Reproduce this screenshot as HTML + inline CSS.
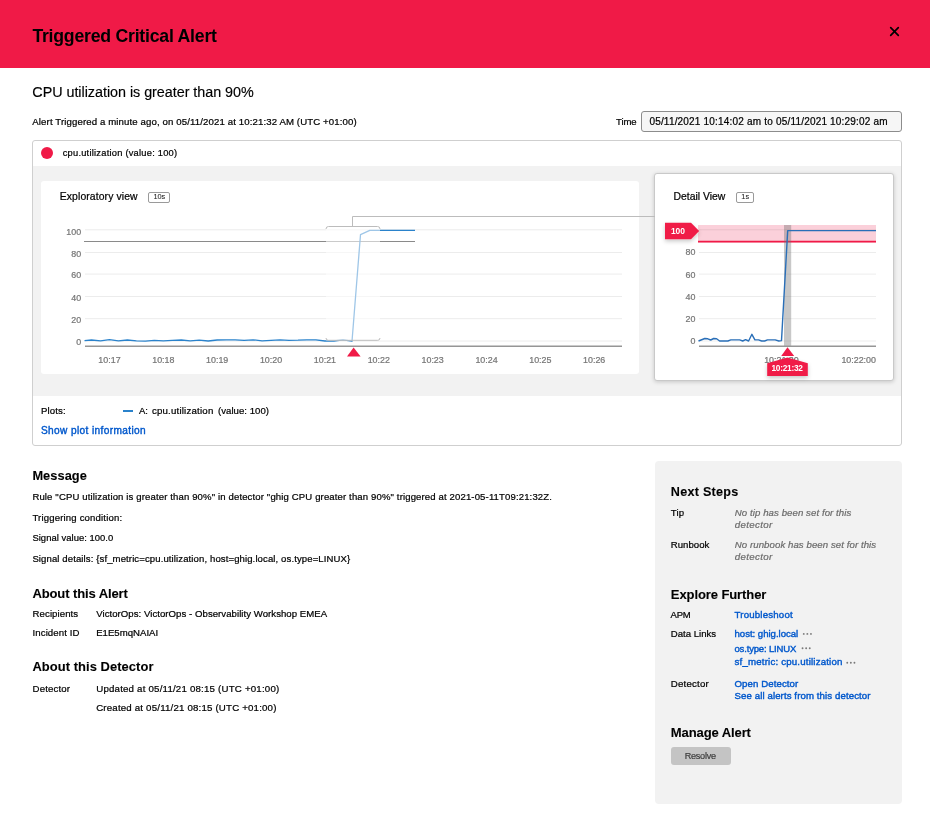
<!DOCTYPE html>
<html><head><meta charset="utf-8"><title>Triggered Critical Alert</title>
<style>
html,body{margin:0;padding:0;}
body{width:930px;height:820px;overflow:hidden;background:#fff;position:relative;font-family:"Liberation Sans",sans-serif;}
.a{position:absolute;box-sizing:border-box;}
.t{position:absolute;white-space:nowrap;font-family:"Liberation Sans",sans-serif;}
.tl{position:absolute;left:0;top:0;width:930px;height:820px;will-change:transform;}
svg.full{position:absolute;left:0;top:0;width:930px;height:820px;}
</style></head><body>
<div class="a" style="left:0;top:0;width:930px;height:68px;background:#f01a47"></div>
<svg class="full" viewBox="0 0 930 820" style="z-index:1"><path d="M890.7,27.7 L898.3,35.3 M898.3,27.7 L890.7,35.3" stroke="#000" stroke-width="1.7" stroke-linecap="round"/></svg>
<div class="a" style="left:641px;top:111px;width:261px;height:21px;border:1px solid #8c8c8c;border-radius:3px;background:#f6f6f6"></div>
<div class="a" style="left:32px;top:140px;width:870px;height:306px;border:1px solid #cfcfcf;border-radius:3px;background:#fff"></div>
<div class="a" style="left:33px;top:166px;width:868px;height:230px;background:#f2f2f2"></div>
<div class="a" style="left:41px;top:147px;width:12px;height:12px;border-radius:50%;background:#f01a47"></div>
<div class="a" style="left:41px;top:181px;width:598px;height:193px;border-radius:3px;background:#fff"></div>
<div class="a" style="left:654px;top:173px;width:240px;height:208px;border:1px solid #c9c9c9;border-radius:3px;background:#fff;box-shadow:0 1px 4px rgba(0,0,0,0.18)"></div>
<div class="a" style="left:148px;top:191.5px;width:22px;height:11px;border:1px solid #9a9a9a;border-radius:2px"></div>
<div class="a" style="left:736px;top:191.5px;width:18px;height:11px;border:1px solid #9a9a9a;border-radius:2px"></div>
<div class="a" style="left:122.8px;top:410.3px;width:10.2px;height:2px;background:#2a82cb"></div>
<div class="a" style="left:655px;top:461px;width:247px;height:343px;border-radius:4px;background:#f2f2f2"></div>
<div class="a" style="left:671px;top:747px;width:60px;height:18px;border-radius:3px;background:#c4c4c4"></div>
<svg class="full" viewBox="0 0 930 820">
<line x1="85" y1="229.8" x2="622" y2="229.8" stroke="#ececec" stroke-width="1"/>
<line x1="85" y1="252.5" x2="622" y2="252.5" stroke="#ececec" stroke-width="1"/>
<line x1="85" y1="274.1" x2="622" y2="274.1" stroke="#ececec" stroke-width="1"/>
<line x1="85" y1="296.5" x2="622" y2="296.5" stroke="#ececec" stroke-width="1"/>
<line x1="85" y1="318.7" x2="622" y2="318.7" stroke="#ececec" stroke-width="1"/>
<line x1="85" y1="341.0" x2="622" y2="341.0" stroke="#ececec" stroke-width="1"/>
<line x1="84" y1="241.5" x2="415" y2="241.5" stroke="#8a8a8a" stroke-width="1.2"/>
<path d="M84.5,340.6 L91.5,340.0 L100.5,340.8 L109.5,339.7 L118.4,340.8 L127.4,340.0 L136.4,340.8 L145.4,341.1 L154.3,340.3 L163.3,340.8 L172.3,340.4 L181.3,340.0 L190.2,340.8 L199.2,340.2 L208.2,341.0 L217.2,340.0 L226.2,339.8 L235.1,339.8 L244.1,340.4 L253.1,339.8 L262.1,340.8 L271.0,340.4 L280.0,339.8 L289.0,340.4 L298.0,340.2 L306.9,339.8 L315.9,339.8 L324.9,341.0 L333.9,341.0 L342.9,339.8 L352.0,341.2 L360.5,234.7 L369.8,230.4 L415.0,230.4" fill="none" stroke="#2a82cb" stroke-width="1.3" stroke-linejoin="round"/>
<rect x="326" y="227" width="54" height="113.5" fill="rgba(255,255,255,0.55)"/>
<path d="M326,229 Q326,226.5 328.5,226.5 L377.5,226.5 Q380,226.5 380,229" fill="none" stroke="#bcbcbc" stroke-width="1"/>
<path d="M326,338 Q326,340.3 328.3,340.3 L377.7,340.3 Q380,340.3 380,338" fill="none" stroke="#bcbcbc" stroke-width="1"/>
<path d="M352.5,226.5 L352.5,216.5 L655,216.5" fill="none" stroke="#bcbcbc" stroke-width="1"/>
<line x1="85" y1="346.3" x2="622" y2="346.3" stroke="#969696" stroke-width="1.5"/>
<polygon points="353.6,347.6 347,356.6 360.6,356.6" fill="#f01a47"/>
<rect x="698" y="225" width="178" height="17.5" fill="#fbd0da"/>
<line x1="699" y1="229.8" x2="876" y2="229.8" stroke="rgba(0,0,0,0.075)" stroke-width="1"/>
<line x1="699" y1="252.5" x2="876" y2="252.5" stroke="rgba(0,0,0,0.075)" stroke-width="1"/>
<line x1="699" y1="274.1" x2="876" y2="274.1" stroke="rgba(0,0,0,0.075)" stroke-width="1"/>
<line x1="699" y1="296.5" x2="876" y2="296.5" stroke="rgba(0,0,0,0.075)" stroke-width="1"/>
<line x1="699" y1="318.7" x2="876" y2="318.7" stroke="rgba(0,0,0,0.075)" stroke-width="1"/>
<line x1="699" y1="341.0" x2="876" y2="341.0" stroke="rgba(0,0,0,0.075)" stroke-width="1"/>
<line x1="698" y1="241.6" x2="876" y2="241.6" stroke="#f01a47" stroke-width="1.6"/>
<rect x="784" y="225" width="7.2" height="121" fill="rgba(110,110,110,0.38)"/>
<path d="M698.5,341.0 L704.8,338.5 L707.8,338.8 L710.7,340.0 L713.7,338.5 L716.6,338.8 L719.6,341.0 L727.9,341.0 L730.8,339.9 L739.7,339.9 L742.7,341.0 L745.6,339.6 L748.6,341.0 L751.9,334.3 L754.9,339.9 L758.6,339.9 L761.6,341.0 L764.6,341.0 L767.5,339.9 L775.2,339.9 L778.8,341.0 L781.5,340.6 L787.7,230.6 L876.0,230.6" fill="none" stroke="#2a6fb8" stroke-width="1.4" stroke-linejoin="round"/>
<line x1="699" y1="346.3" x2="876" y2="346.3" stroke="#969696" stroke-width="1.5"/>
</svg>
<div class="tl"><div class="t" style="left:32.40px;top:28.02px;font-size:17.70px;line-height:17.70px;letter-spacing:-0.239px;font-weight:bold;font-style:normal;color:#000;-webkit-text-stroke:0.00px currentColor;">Triggered Critical Alert</div>
<div class="t" style="left:32.30px;top:85.05px;font-size:14.35px;line-height:14.35px;letter-spacing:-0.029px;font-weight:normal;font-style:normal;color:#000;-webkit-text-stroke:0.15px currentColor;">CPU utilization is greater than 90%</div>
<div class="t" style="left:32.30px;top:116.53px;font-size:9.65px;line-height:9.65px;letter-spacing:0.116px;font-weight:normal;font-style:normal;color:#000;-webkit-text-stroke:0.22px currentColor;">Alert Triggered a minute ago, on 05/11/2021 at 10:21:32 AM (UTC +01:00)</div>
<div class="t" style="left:616.10px;top:116.92px;font-size:9.55px;line-height:9.55px;letter-spacing:-0.117px;font-weight:normal;font-style:normal;color:#000;-webkit-text-stroke:0.22px currentColor;">Time</div>
<div class="t" style="left:649.40px;top:116.53px;font-size:10.00px;line-height:10.00px;letter-spacing:0.191px;font-weight:normal;font-style:normal;color:#000;-webkit-text-stroke:0.22px currentColor;">05/11/2021 10:14:02 am to 05/11/2021 10:29:02 am</div>
<div class="t" style="left:62.70px;top:148.93px;font-size:9.30px;line-height:9.30px;letter-spacing:0.237px;font-weight:normal;font-style:normal;color:#000;-webkit-text-stroke:0.22px currentColor;">cpu.utilization (value: 100)</div>
<div class="t" style="left:59.80px;top:191.50px;font-size:10.40px;line-height:10.40px;letter-spacing:0.099px;font-weight:normal;font-style:normal;color:#000;-webkit-text-stroke:0.22px currentColor;">Exploratory view</div>
<div class="t" style="left:673.60px;top:191.50px;font-size:10.40px;line-height:10.40px;letter-spacing:-0.018px;font-weight:normal;font-style:normal;color:#000;-webkit-text-stroke:0.22px currentColor;">Detail View</div>
<div class="t" style="left:41.00px;top:405.63px;font-size:9.65px;line-height:9.65px;letter-spacing:0.120px;font-weight:normal;font-style:normal;color:#000;-webkit-text-stroke:0.22px currentColor;">Plots:</div>
<div class="t" style="left:139.00px;top:405.72px;font-size:9.55px;line-height:9.55px;letter-spacing:-0.168px;font-weight:normal;font-style:normal;color:#000;-webkit-text-stroke:0.22px currentColor;">A:</div>
<div class="t" style="left:151.90px;top:405.59px;font-size:9.70px;line-height:9.70px;letter-spacing:0.192px;font-weight:normal;font-style:normal;color:#000;-webkit-text-stroke:0.22px currentColor;">cpu.utilization</div>
<div class="t" style="left:218.00px;top:405.67px;font-size:9.60px;line-height:9.60px;letter-spacing:0.030px;font-weight:normal;font-style:normal;color:#000;-webkit-text-stroke:0.22px currentColor;">(value: 100)</div>
<div class="t" style="left:41.00px;top:425.75px;font-size:10.10px;line-height:10.10px;letter-spacing:0.378px;font-weight:normal;font-style:normal;color:#0058cc;-webkit-text-stroke:0.40px currentColor;">Show plot information</div>
<div class="t" style="left:32.40px;top:469.96px;font-size:12.80px;line-height:12.80px;letter-spacing:0.059px;font-weight:bold;font-style:normal;color:#000;-webkit-text-stroke:0.10px currentColor;">Message</div>
<div class="t" style="left:32.40px;top:491.92px;font-size:9.55px;line-height:9.55px;letter-spacing:0.136px;font-weight:normal;font-style:normal;color:#000;-webkit-text-stroke:0.22px currentColor;">Rule "CPU utilization is greater than 90%" in detector "ghig CPU greater than 90%" triggered at 2021-05-11T09:21:32Z.</div>
<div class="t" style="left:32.40px;top:512.92px;font-size:9.55px;line-height:9.55px;letter-spacing:0.180px;font-weight:normal;font-style:normal;color:#000;-webkit-text-stroke:0.22px currentColor;">Triggering condition:</div>
<div class="t" style="left:32.40px;top:532.80px;font-size:9.45px;line-height:9.45px;letter-spacing:0.032px;font-weight:normal;font-style:normal;color:#000;-webkit-text-stroke:0.22px currentColor;">Signal value: 100.0</div>
<div class="t" style="left:32.40px;top:553.82px;font-size:9.55px;line-height:9.55px;letter-spacing:0.110px;font-weight:normal;font-style:normal;color:#000;-webkit-text-stroke:0.22px currentColor;">Signal details: {sf_metric=cpu.utilization, host=ghig.local, os.type=LINUX}</div>
<div class="t" style="left:32.40px;top:586.85px;font-size:13.05px;line-height:13.05px;letter-spacing:-0.127px;font-weight:bold;font-style:normal;color:#000;-webkit-text-stroke:0.10px currentColor;">About this Alert</div>
<div class="t" style="left:32.60px;top:609.03px;font-size:9.65px;line-height:9.65px;letter-spacing:0.064px;font-weight:normal;font-style:normal;color:#000;-webkit-text-stroke:0.22px currentColor;">Recipients</div>
<div class="t" style="left:96.20px;top:609.07px;font-size:9.60px;line-height:9.60px;letter-spacing:0.046px;font-weight:normal;font-style:normal;color:#000;-webkit-text-stroke:0.22px currentColor;">VictorOps: VictorOps - Observability Workshop EMEA</div>
<div class="t" style="left:32.60px;top:627.83px;font-size:9.65px;line-height:9.65px;letter-spacing:0.074px;font-weight:normal;font-style:normal;color:#000;-webkit-text-stroke:0.22px currentColor;">Incident ID</div>
<div class="t" style="left:96.20px;top:627.87px;font-size:9.60px;line-height:9.60px;letter-spacing:0.011px;font-weight:normal;font-style:normal;color:#000;-webkit-text-stroke:0.22px currentColor;">E1E5mqNAIAI</div>
<div class="t" style="left:32.40px;top:661.24px;font-size:12.95px;line-height:12.95px;letter-spacing:0.056px;font-weight:bold;font-style:normal;color:#000;-webkit-text-stroke:0.10px currentColor;">About this Detector</div>
<div class="t" style="left:32.60px;top:684.13px;font-size:9.65px;line-height:9.65px;letter-spacing:0.147px;font-weight:normal;font-style:normal;color:#000;-webkit-text-stroke:0.22px currentColor;">Detector</div>
<div class="t" style="left:96.20px;top:684.09px;font-size:9.70px;line-height:9.70px;letter-spacing:0.199px;font-weight:normal;font-style:normal;color:#000;-webkit-text-stroke:0.22px currentColor;">Updated at 05/11/21 08:15 (UTC +01:00)</div>
<div class="t" style="left:96.20px;top:702.79px;font-size:9.70px;line-height:9.70px;letter-spacing:0.182px;font-weight:normal;font-style:normal;color:#000;-webkit-text-stroke:0.22px currentColor;">Created at 05/11/21 08:15 (UTC +01:00)</div>
<div class="t" style="left:670.80px;top:486.23px;font-size:12.60px;line-height:12.60px;letter-spacing:0.257px;font-weight:bold;font-style:normal;color:#000;-webkit-text-stroke:0.10px currentColor;">Next Steps</div>
<div class="t" style="left:670.80px;top:507.73px;font-size:9.65px;line-height:9.65px;letter-spacing:0.120px;font-weight:normal;font-style:normal;color:#000;-webkit-text-stroke:0.22px currentColor;">Tip</div>
<div class="t" style="left:734.80px;top:507.73px;font-size:9.65px;line-height:9.65px;letter-spacing:0.075px;font-weight:normal;font-style:italic;color:#6b6b6b;-webkit-text-stroke:0.22px currentColor;">No tip has been set for this</div>
<div class="t" style="left:734.80px;top:520.25px;font-size:9.75px;line-height:9.75px;letter-spacing:0.317px;font-weight:normal;font-style:italic;color:#6b6b6b;-webkit-text-stroke:0.22px currentColor;">detector</div>
<div class="t" style="left:670.80px;top:539.67px;font-size:9.60px;line-height:9.60px;letter-spacing:0.016px;font-weight:normal;font-style:normal;color:#000;-webkit-text-stroke:0.22px currentColor;">Runbook</div>
<div class="t" style="left:734.80px;top:539.63px;font-size:9.65px;line-height:9.65px;letter-spacing:0.071px;font-weight:normal;font-style:italic;color:#6b6b6b;-webkit-text-stroke:0.22px currentColor;">No runbook has been set for this</div>
<div class="t" style="left:734.80px;top:552.15px;font-size:9.75px;line-height:9.75px;letter-spacing:0.317px;font-weight:normal;font-style:italic;color:#6b6b6b;-webkit-text-stroke:0.22px currentColor;">detector</div>
<div class="t" style="left:670.80px;top:587.95px;font-size:13.05px;line-height:13.05px;letter-spacing:-0.112px;font-weight:bold;font-style:normal;color:#000;-webkit-text-stroke:0.10px currentColor;">Explore Further</div>
<div class="t" style="left:670.61px;top:609.96px;font-size:9.50px;line-height:9.50px;letter-spacing:-0.300px;font-weight:normal;font-style:normal;color:#000;-webkit-text-stroke:0.22px currentColor;">APM</div>
<div class="t" style="left:734.50px;top:609.79px;font-size:9.70px;line-height:9.70px;letter-spacing:0.182px;font-weight:normal;font-style:normal;color:#0058cc;-webkit-text-stroke:0.40px currentColor;">Troubleshoot</div>
<div class="t" style="left:670.80px;top:628.87px;font-size:9.60px;line-height:9.60px;letter-spacing:-0.003px;font-weight:normal;font-style:normal;color:#000;-webkit-text-stroke:0.22px currentColor;">Data Links</div>
<div class="t" style="left:734.50px;top:628.87px;font-size:9.60px;line-height:9.60px;letter-spacing:-0.018px;font-weight:normal;font-style:normal;color:#0058cc;-webkit-text-stroke:0.40px currentColor;">host: ghig.local</div>
<div class="t" style="left:734.50px;top:644.06px;font-size:9.50px;line-height:9.50px;letter-spacing:-0.166px;font-weight:normal;font-style:normal;color:#0058cc;-webkit-text-stroke:0.40px currentColor;">os.type: LINUX</div>
<div class="t" style="left:734.50px;top:657.39px;font-size:9.70px;line-height:9.70px;letter-spacing:0.181px;font-weight:normal;font-style:normal;color:#0058cc;-webkit-text-stroke:0.40px currentColor;">sf_metric: cpu.utilization</div>
<div class="t" style="left:670.80px;top:678.79px;font-size:9.70px;line-height:9.70px;letter-spacing:0.188px;font-weight:normal;font-style:normal;color:#000;-webkit-text-stroke:0.22px currentColor;">Detector</div>
<div class="t" style="left:734.50px;top:678.83px;font-size:9.65px;line-height:9.65px;letter-spacing:0.092px;font-weight:normal;font-style:normal;color:#0058cc;-webkit-text-stroke:0.40px currentColor;">Open Detector</div>
<div class="t" style="left:734.50px;top:691.43px;font-size:9.65px;line-height:9.65px;letter-spacing:0.104px;font-weight:normal;font-style:normal;color:#0058cc;-webkit-text-stroke:0.40px currentColor;">See all alerts from this detector</div>
<div class="t" style="left:670.80px;top:725.95px;font-size:13.05px;line-height:13.05px;letter-spacing:-0.116px;font-weight:bold;font-style:normal;color:#000;-webkit-text-stroke:0.10px currentColor;">Manage Alert</div>
<div class="t" style="left:684.70px;top:752.30px;font-size:9.10px;line-height:9.10px;letter-spacing:-0.249px;font-weight:normal;font-style:normal;color:#3c3c3c;-webkit-text-stroke:0.20px currentColor;">Resolve</div>
<div class="t" style="left:153.60px;top:193.14px;font-size:7.40px;line-height:7.40px;letter-spacing:-0.110px;font-weight:normal;font-style:normal;color:#222;-webkit-text-stroke:0.05px currentColor;">10s</div>
<div class="t" style="left:741.30px;top:193.14px;font-size:7.40px;line-height:7.40px;letter-spacing:0.000px;font-weight:normal;font-style:normal;color:#222;-webkit-text-stroke:0.05px currentColor;">1s</div>
<div class="t" style="left:66.33px;top:227.77px;font-size:8.90px;line-height:8.90px;letter-spacing:0.000px;font-weight:normal;font-style:normal;color:#767676;-webkit-text-stroke:0.22px currentColor;">100</div>
<div class="t" style="left:71.26px;top:249.67px;font-size:8.90px;line-height:8.90px;letter-spacing:0.000px;font-weight:normal;font-style:normal;color:#767676;-webkit-text-stroke:0.22px currentColor;">80</div>
<div class="t" style="left:71.26px;top:271.27px;font-size:8.90px;line-height:8.90px;letter-spacing:0.000px;font-weight:normal;font-style:normal;color:#767676;-webkit-text-stroke:0.22px currentColor;">60</div>
<div class="t" style="left:71.26px;top:293.57px;font-size:8.90px;line-height:8.90px;letter-spacing:0.000px;font-weight:normal;font-style:normal;color:#767676;-webkit-text-stroke:0.22px currentColor;">40</div>
<div class="t" style="left:71.26px;top:315.77px;font-size:8.90px;line-height:8.90px;letter-spacing:0.000px;font-weight:normal;font-style:normal;color:#767676;-webkit-text-stroke:0.22px currentColor;">20</div>
<div class="t" style="left:76.20px;top:337.97px;font-size:8.90px;line-height:8.90px;letter-spacing:0.000px;font-weight:normal;font-style:normal;color:#767676;-webkit-text-stroke:0.22px currentColor;">0</div>
<div class="t" style="left:685.46px;top:248.47px;font-size:8.90px;line-height:8.90px;letter-spacing:0.000px;font-weight:normal;font-style:normal;color:#767676;-webkit-text-stroke:0.22px currentColor;">80</div>
<div class="t" style="left:685.46px;top:270.67px;font-size:8.90px;line-height:8.90px;letter-spacing:0.000px;font-weight:normal;font-style:normal;color:#767676;-webkit-text-stroke:0.22px currentColor;">60</div>
<div class="t" style="left:685.46px;top:292.87px;font-size:8.90px;line-height:8.90px;letter-spacing:0.000px;font-weight:normal;font-style:normal;color:#767676;-webkit-text-stroke:0.22px currentColor;">40</div>
<div class="t" style="left:685.46px;top:315.07px;font-size:8.90px;line-height:8.90px;letter-spacing:0.000px;font-weight:normal;font-style:normal;color:#767676;-webkit-text-stroke:0.22px currentColor;">20</div>
<div class="t" style="left:690.40px;top:337.27px;font-size:8.90px;line-height:8.90px;letter-spacing:0.000px;font-weight:normal;font-style:normal;color:#767676;-webkit-text-stroke:0.22px currentColor;">0</div>
<div class="t" style="left:98.36px;top:356.07px;font-size:8.90px;line-height:8.90px;letter-spacing:0.000px;font-weight:normal;font-style:normal;color:#767676;-webkit-text-stroke:0.22px currentColor;">10:17</div>
<div class="t" style="left:152.22px;top:356.07px;font-size:8.90px;line-height:8.90px;letter-spacing:0.000px;font-weight:normal;font-style:normal;color:#767676;-webkit-text-stroke:0.22px currentColor;">10:18</div>
<div class="t" style="left:206.08px;top:356.07px;font-size:8.90px;line-height:8.90px;letter-spacing:0.000px;font-weight:normal;font-style:normal;color:#767676;-webkit-text-stroke:0.22px currentColor;">10:19</div>
<div class="t" style="left:259.94px;top:356.07px;font-size:8.90px;line-height:8.90px;letter-spacing:0.000px;font-weight:normal;font-style:normal;color:#767676;-webkit-text-stroke:0.22px currentColor;">10:20</div>
<div class="t" style="left:313.80px;top:356.07px;font-size:8.90px;line-height:8.90px;letter-spacing:0.000px;font-weight:normal;font-style:normal;color:#767676;-webkit-text-stroke:0.22px currentColor;">10:21</div>
<div class="t" style="left:367.66px;top:356.07px;font-size:8.90px;line-height:8.90px;letter-spacing:0.000px;font-weight:normal;font-style:normal;color:#767676;-webkit-text-stroke:0.22px currentColor;">10:22</div>
<div class="t" style="left:421.52px;top:356.07px;font-size:8.90px;line-height:8.90px;letter-spacing:0.000px;font-weight:normal;font-style:normal;color:#767676;-webkit-text-stroke:0.22px currentColor;">10:23</div>
<div class="t" style="left:475.38px;top:356.07px;font-size:8.90px;line-height:8.90px;letter-spacing:0.000px;font-weight:normal;font-style:normal;color:#767676;-webkit-text-stroke:0.22px currentColor;">10:24</div>
<div class="t" style="left:529.24px;top:356.07px;font-size:8.90px;line-height:8.90px;letter-spacing:0.000px;font-weight:normal;font-style:normal;color:#767676;-webkit-text-stroke:0.22px currentColor;">10:25</div>
<div class="t" style="left:583.10px;top:356.07px;font-size:8.90px;line-height:8.90px;letter-spacing:0.000px;font-weight:normal;font-style:normal;color:#767676;-webkit-text-stroke:0.22px currentColor;">10:26</div>
<div class="t" style="left:764.19px;top:356.07px;font-size:8.90px;line-height:8.90px;letter-spacing:0.000px;font-weight:normal;font-style:normal;color:#767676;-webkit-text-stroke:0.22px currentColor;">10:21:30</div>
<div class="t" style="left:841.39px;top:356.07px;font-size:8.90px;line-height:8.90px;letter-spacing:0.000px;font-weight:normal;font-style:normal;color:#767676;-webkit-text-stroke:0.22px currentColor;">10:22:00</div></div>
<svg class="full" viewBox="0 0 930 820">
<defs><filter id="sh" x="-30%" y="-30%" width="160%" height="180%"><feDropShadow dx="0" dy="2" stdDeviation="2" flood-color="#000" flood-opacity="0.22"/></filter></defs>
<polygon points="665,222.7 691,222.7 699.2,231 691,239.2 665,239.2" fill="#f01a47" filter="url(#sh)"/>
<polygon points="787.5,347.3 781.2,356.1 794.2,356.1" fill="#f01a47"/>
<polygon points="787.5,357.4 807.8,363.3 807.8,375.9 767.2,375.9 767.2,363.3" fill="#f01a47" filter="url(#sh)"/>
<circle cx="803.75" cy="633.90" r="0.95" fill="#7a7a7a"/>
<circle cx="807.35" cy="633.90" r="0.95" fill="#7a7a7a"/>
<circle cx="810.95" cy="633.90" r="0.95" fill="#7a7a7a"/>
<circle cx="802.55" cy="648.20" r="0.95" fill="#7a7a7a"/>
<circle cx="806.15" cy="648.20" r="0.95" fill="#7a7a7a"/>
<circle cx="809.75" cy="648.20" r="0.95" fill="#7a7a7a"/>
<circle cx="847.25" cy="662.80" r="0.95" fill="#7a7a7a"/>
<circle cx="850.85" cy="662.80" r="0.95" fill="#7a7a7a"/>
<circle cx="854.45" cy="662.80" r="0.95" fill="#7a7a7a"/>
</svg>
<div class="tl"><div class="t" style="left:670.90px;top:226.90px;font-size:8.50px;line-height:8.50px;letter-spacing:-0.077px;font-weight:bold;font-style:normal;color:#fff;-webkit-text-stroke:0.00px currentColor;">100</div>
<div class="t" style="left:771.40px;top:364.17px;font-size:8.30px;line-height:8.30px;letter-spacing:-0.243px;font-weight:bold;font-style:normal;color:#fff;-webkit-text-stroke:0.00px currentColor;">10:21:32</div></div>
</body></html>
